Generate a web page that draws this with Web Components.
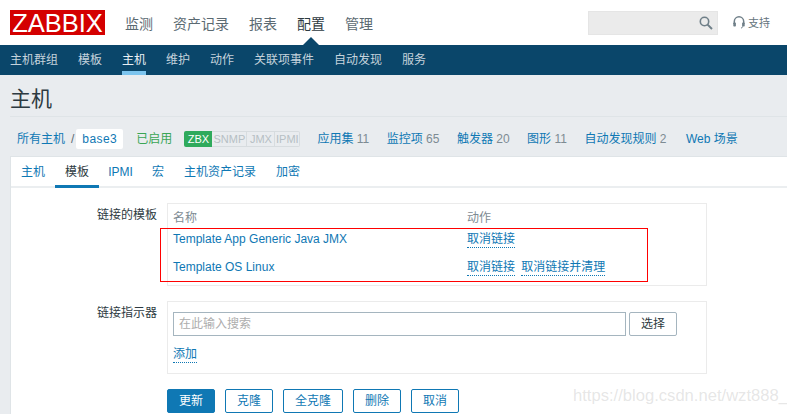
<!DOCTYPE html>
<html>
<head>
<meta charset="utf-8">
<title>Zabbix</title>
<style>
  html, body { margin: 0; padding: 0; }
  body {
    width: 787px; height: 414px; overflow: hidden; background: #e9ecef;
    font: 12px/14px "Liberation Sans", "Noto Sans CJK SC", sans-serif; color: #1f2c33;
    position: relative;
  }
</style>
</head>
<body>
<zbx-header></zbx-header>
<zbx-subnav></zbx-subnav>
<zbx-title>主机</zbx-title>
<zbx-hostbar></zbx-hostbar>
<zbx-card></zbx-card>
<zbx-watermark>https://blog.csdn.net/wzt888_</zbx-watermark>

<script>
class ZbxHeader extends HTMLElement {
  constructor() {
    super();
    this.attachShadow({ mode: "open" });
    this.shadowRoot.innerHTML = `
    <style>
      :host { display: flex; align-items: flex-start; height: 45px; background: #fff; }
      .logo { margin: 10px 20px 0 10px; width: 95px; height: 25px; background: #d40000; color: #fff;
        font: 25.5px/26px "Liberation Sans", sans-serif; text-align: center; white-space: nowrap; }
      nav { display: flex; gap: 20px; margin-top: 14px; font-size: 14px; line-height: 20px; color: #5b6a72; flex: 1; }
      nav .on { color: #2d3a41; position: relative; }
      nav .on::after { content: ""; position: absolute; left: 6px; top: 23px; border: 8px solid transparent;
        border-top: 0; border-bottom-color: #0a466a; }
      .search { width: 130px; height: 24px; box-sizing: border-box; margin: 11px 0 0; background: #ebebeb; border: 1px solid #e5e5e5; position: relative; }
      .search svg { position: absolute; right: 4px; top: 4px; }
      .help { display: flex; align-items: center; gap: 3px; margin: 15px 17px 0 15px; font-size: 11px; line-height: 16px; color: #65747c; }
    </style>
    <div class="logo">ZABBIX</div>
    <nav><span>监测</span><span>资产记录</span><span>报表</span><span class="on">配置</span><span>管理</span></nav>
    <div class="search">
      <svg width="14" height="14" viewBox="0 0 14 14" fill="none" stroke="#6f7f88" stroke-width="1.6">
        <circle cx="5.5" cy="5.5" r="4.2"/><path d="M8.6 8.6 13 13" stroke-width="2"/>
      </svg>
    </div>
    <div class="help">
      <svg width="12" height="14" viewBox="0 0 12 14" fill="none" stroke="#6f7f88" stroke-width="1.5">
        <path d="M1.3 8V5.5a4.7 4.7 0 0 1 9.4 0V8"/>
        <rect x="0.3" y="6.5" width="2.6" height="4" rx="0.8" fill="#6f7f88" stroke="none"/>
        <rect x="9.1" y="6.5" width="2.6" height="4" rx="0.8" fill="#6f7f88" stroke="none"/>
        <path d="M10 10.5 8 12.3" stroke-width="1"/>
      </svg>
      <span>支持</span>
    </div>`;
  }
}

class ZbxSubnav extends HTMLElement {
  constructor() {
    super();
    this.attachShadow({ mode: "open" });
    const items = ["主机群组", "模板", "主机", "维护", "动作", "关联项事件", "自动发现", "服务"];
    this.shadowRoot.innerHTML = `
    <style>
      :host { display: flex; gap: 20px; height: 30px; padding-left: 10px; background: #0a466a; color: #c5d3dc; line-height: 30px; }
      span { display: block; height: 30px; box-sizing: border-box; }
      .on { color: #e8f0f5; border-bottom: 4px solid #7cc4ee; }
    </style>
    ${items.map(t => `<span class="${t === "主机" ? "on" : ""}">${t}</span>`).join("")}`;
  }
}

class ZbxTitle extends HTMLElement {
  constructor() {
    super();
    this.attachShadow({ mode: "open" });
    this.shadowRoot.innerHTML = `
    <style>
      :host { display: block; margin: 0 0 0 10px; height: 42px; box-sizing: border-box; padding-top: 9px;
        border-bottom: 1px solid #dfe4e7; font-size: 21px; line-height: 30px; color: #2d3a41; }
    </style>
    <slot></slot>`;
  }
}

class ZbxHostbar extends HTMLElement {
  constructor() {
    super();
    this.attachShadow({ mode: "open" });
    const links = [["应用集", "11"], ["监控项", "65"], ["触发器", "20"], ["图形", "11"], ["自动发现规则", "2"]];
    this.shadowRoot.innerHTML = `
    <style>
      :host { display: flex; align-items: center; height: 39px; box-sizing: border-box; padding: 5px 0 0 17px; color: #0f78b4; }
      .crumb { display: flex; align-items: center; }
      .sep { color: #5b6a72; margin: 0 2px 0 6px; }
      .cur { width: 47px; box-sizing: border-box; background: #fff; border-radius: 2px; padding-left: 6px; height: 20px; line-height: 20px; letter-spacing: 0.4px; }
      .on { color: #3aa655; margin: 0 12px 0 13px; }
      .avail { display: flex; height: 16px; font-size: 11px; color: #b6bfc4; margin-right: 17px; }
      .avail span { box-sizing: border-box; height: 16px; line-height: 15px; text-align: center; border: 1px solid #d7dcdf; border-left: 0; }
      .avail .zbx { background: #2faa5c; color: #fff; border: 0; line-height: 16px; border-radius: 2px 0 0 2px; }
      .avail span:last-child { border-radius: 0 2px 2px 0; }
      .links { display: flex; gap: 17.5px; }
      .links i { font-style: normal; color: #7d8b93; }
      .web { margin-left: 2px; }
    </style>
    <div class="crumb"><span>所有主机</span><span class="sep">/</span><span class="cur">base3</span></div>
    <span class="on">已启用</span>
    <div class="avail"><span class="zbx" style="width:28px">ZBX</span><span style="width:35px">SNMP</span><span style="width:28px">JMX</span><span style="width:25px">IPMI</span></div>
    <div class="links">
      ${links.map(([t, n]) => `<span>${t} <i>${n}</i></span>`).join("")}
      <span class="web">Web 场景</span>
    </div>`;
  }
}

class ZbxTabs extends HTMLElement {
  constructor() {
    super();
    this.attachShadow({ mode: "open" });
    const tabs = ["主机", "模板", "IPMI", "宏", "主机资产记录", "加密"];
    this.shadowRoot.innerHTML = `
    <style>
      :host { display: flex; height: 31px; box-sizing: border-box; border-bottom: 2px solid #ebeef0; color: #0f78b4; line-height: 30px; }
      span { display: block; padding: 0 10px; height: 31px; box-sizing: border-box; }
      .on { color: #2d3a41; border-bottom: 3px solid #0f78b4; }
      .ipmi { width: 43px; padding: 0; text-align: center; }
    </style>
    ${tabs.map(t => `<span class="${t === "模板" ? "on" : t === "IPMI" ? "ipmi" : ""}">${t}</span>`).join("")}`;
  }
}

class ZbxRow extends HTMLElement {
  constructor() {
    super();
    this.attachShadow({ mode: "open" });
  }
  connectedCallback() {
    this.shadowRoot.innerHTML = `
    <style>
      :host { display: grid; grid-template-columns: 146px 540px; column-gap: 10px; margin-bottom: 15px; }
      .label { text-align: right; color: #2d3a41; line-height: 14px; padding-top: 5px; }
      .box { border: 1px solid #ebebeb; box-sizing: border-box; padding: 0 5px; }
    </style>
    <div class="label">${this.getAttribute("label") || ""}</div>
    <div class="box"><slot></slot></div>`;
  }
}

class ZbxBtn extends HTMLElement {
  constructor() {
    super();
    this.attachShadow({ mode: "open" });
    this.shadowRoot.innerHTML = `
    <style>
      :host { display: inline-block; box-sizing: border-box; height: 24px; line-height: 22px; text-align: center;
        border: 1px solid #0f78b4; border-radius: 2px; color: #0f78b4; background: #fff; }
      :host([primary]) { background: #0f78b4; color: #fff; }
      :host([plain]) { border-color: #a5b5bf; color: #2d3a41; }
    </style>
    <slot></slot>`;
  }
}

class ZbxCard extends HTMLElement {
  constructor() {
    super();
    this.attachShadow({ mode: "open" });
    this.shadowRoot.innerHTML = `
    <style>
      :host { display: block; position: relative; margin-left: 10px; height: 258px; background: #fff;
        border-left: 1px solid #dfe4e7; border-top: 1px solid #dfe4e7; }
      .form { padding-top: 15px; }
      table { border-collapse: collapse; width: 100%; margin-bottom: 4px; }
      th, td { box-sizing: border-box; padding: 0; }
      th { font-weight: normal; color: #7d8b93; text-align: left; height: 21px; padding-top: 6px; }
      td { height: 28px; color: #0f78b4; }
      .col1 { width: 294px; }
      u { text-decoration: none; border-bottom: 1px dotted #0f78b4; margin-right: 3px; padding-bottom: 1px; }
      .mark { position: absolute; left: 149px; top: 71px; width: 486px; height: 52px; border: 1px solid #f00; pointer-events: none; }
      .pick { display: flex; gap: 3px; padding-top: 10px; }
      .input { width: 453px; height: 24px; box-sizing: border-box; border: 1px solid #a5b5bf; line-height: 23px; padding-left: 5px; color: #adadad; }
      .add { margin: 11px 0 12px; height: 14px; color: #0f78b4; }
      .actions { display: flex; gap: 10px; margin-left: 156px; }
    </style>
    <zbx-tabs></zbx-tabs>
    <div class="form">
      <zbx-row label="链接的模板">
        <table>
          <tr><th class="col1">名称</th><th>动作</th></tr>
          <tr><td>Template App Generic Java JMX</td><td><u>取消链接</u></td></tr>
          <tr><td>Template OS Linux</td><td><u>取消链接</u> <u>取消链接并清理</u></td></tr>
        </table>
      </zbx-row>
      <zbx-row label="链接指示器">
        <div class="pick"><div class="input">在此输入搜索</div><zbx-btn plain style="width:48px">选择</zbx-btn></div>
        <div class="add"><u>添加</u></div>
      </zbx-row>
      <div class="actions">
        <zbx-btn primary style="width:48px">更新</zbx-btn>
        <zbx-btn style="width:48px">克隆</zbx-btn>
        <zbx-btn style="width:60px">全克隆</zbx-btn>
        <zbx-btn style="width:48px">删除</zbx-btn>
        <zbx-btn style="width:48px">取消</zbx-btn>
      </div>
    </div>
    <div class="mark"></div>`;
  }
}

class ZbxWatermark extends HTMLElement {
  constructor() {
    super();
    this.attachShadow({ mode: "open" });
    this.shadowRoot.innerHTML = `
    <style>
      :host { position: absolute; left: 573px; top: 386px; font-size: 16.6px; line-height: 20px; color: rgba(170,170,170,0.3); white-space: nowrap; }
    </style>
    <slot></slot>`;
  }
}

customElements.define("zbx-header", ZbxHeader);
customElements.define("zbx-subnav", ZbxSubnav);
customElements.define("zbx-title", ZbxTitle);
customElements.define("zbx-hostbar", ZbxHostbar);
customElements.define("zbx-tabs", ZbxTabs);
customElements.define("zbx-row", ZbxRow);
customElements.define("zbx-btn", ZbxBtn);
customElements.define("zbx-card", ZbxCard);
customElements.define("zbx-watermark", ZbxWatermark);
</script>
</body>
</html>
